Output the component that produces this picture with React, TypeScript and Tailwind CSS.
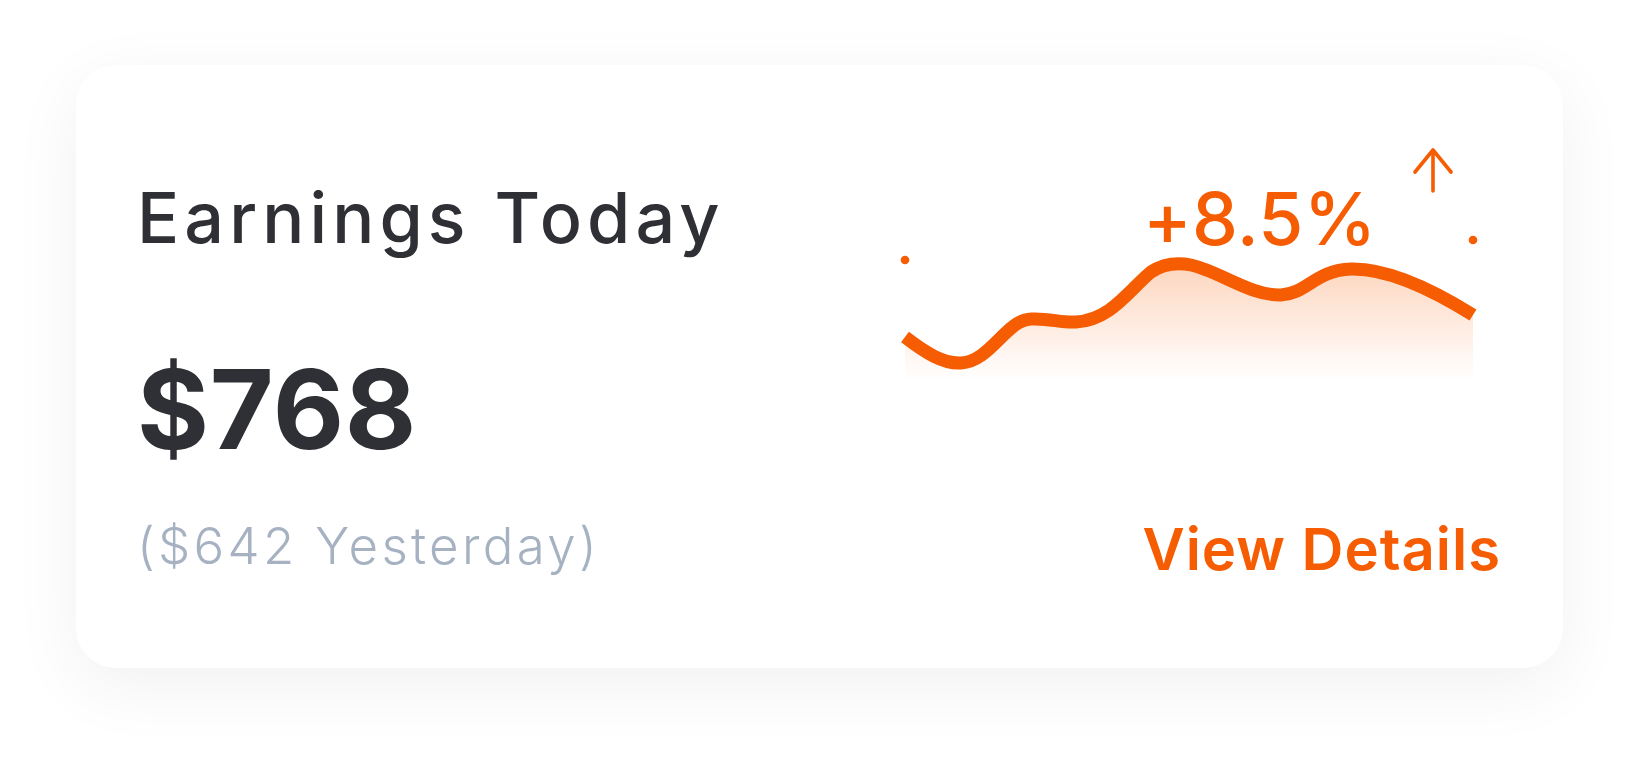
import React from "react";

const ORANGE = "#f65c02";

function Trend() {
  // coordinates in the viewBox match page pixels, so the curve can be read off the design
  const line =
    "M904,337 C925,353 942,364 960,363 C990,361 1005,320 1030,319 C1048,318 1060,323 1075,322 C1110,320 1128,290 1150,272 C1165,262 1180,263 1190,265 C1220,272 1250,296 1280,295 C1305,294 1315,270 1350,269 C1390,268 1440,295 1472,315";
  return (
    <svg width="584" height="245" viewBox="896 140 584 245" className="block">
      <defs>
        <linearGradient id="fillFade" x1="0" y1="262" x2="0" y2="380" gradientUnits="userSpaceOnUse">
          <stop offset="0" stopColor={ORANGE} stopOpacity="0.26" />
          <stop offset="1" stopColor={ORANGE} stopOpacity="0" />
        </linearGradient>
      </defs>
      <path d={`${line} L1472,380 L904,380 Z`} fill="url(#fillFade)" />
      <path d={line} fill="none" stroke={ORANGE} strokeWidth="13" />
      <circle cx="904" cy="260" r="4.3" fill={ORANGE} />
      <circle cx="1472" cy="240" r="4.3" fill={ORANGE} />
      <path
        d="M1432,191 V151 M1414,172 L1432,150 L1450,172"
        fill="none"
        stroke={ORANGE}
        strokeWidth="3.6"
        strokeLinecap="round"
        strokeLinejoin="round"
      />
    </svg>
  );
}

export default function App() {
  return (
    <div className="min-h-screen bg-white pt-[65px] pl-[76px] font-['Inter',sans-serif]">
      <div className="flex h-[603px] w-[1487px] justify-between rounded-[40px] bg-white pl-[61px] pr-[62px] shadow-[0_18px_70px_rgba(0,0,0,0.06)]">
        <div className="flex flex-col pt-[118px]">
          <h2 className="text-[70px] font-medium leading-none tracking-[5.1px] text-[#2f3035]">Earnings Today</h2>
          <div className="mt-[101px] text-[110px] font-bold leading-none tracking-[0.7px] text-[#2f3035]">$768</div>
          <div className="mt-[56px] text-[51px] font-light leading-none tracking-[3.3px] text-[#a6b2c2]">($642 Yesterday)</div>
        </div>
        <div className="flex w-[604px] flex-col justify-between pt-[75px] pb-[90px]">
          <div className="relative">
            <Trend />
            <span className="absolute left-[246px] top-[42px] text-[73px] font-medium leading-none tracking-[0.3px] text-[#f65c02]">
              +8.5%
            </span>
          </div>
          <a href="#" className="self-end text-[58px] font-semibold leading-none tracking-[1px] text-[#f65c02]">
            View Details
          </a>
        </div>
      </div>
    </div>
  );
}
